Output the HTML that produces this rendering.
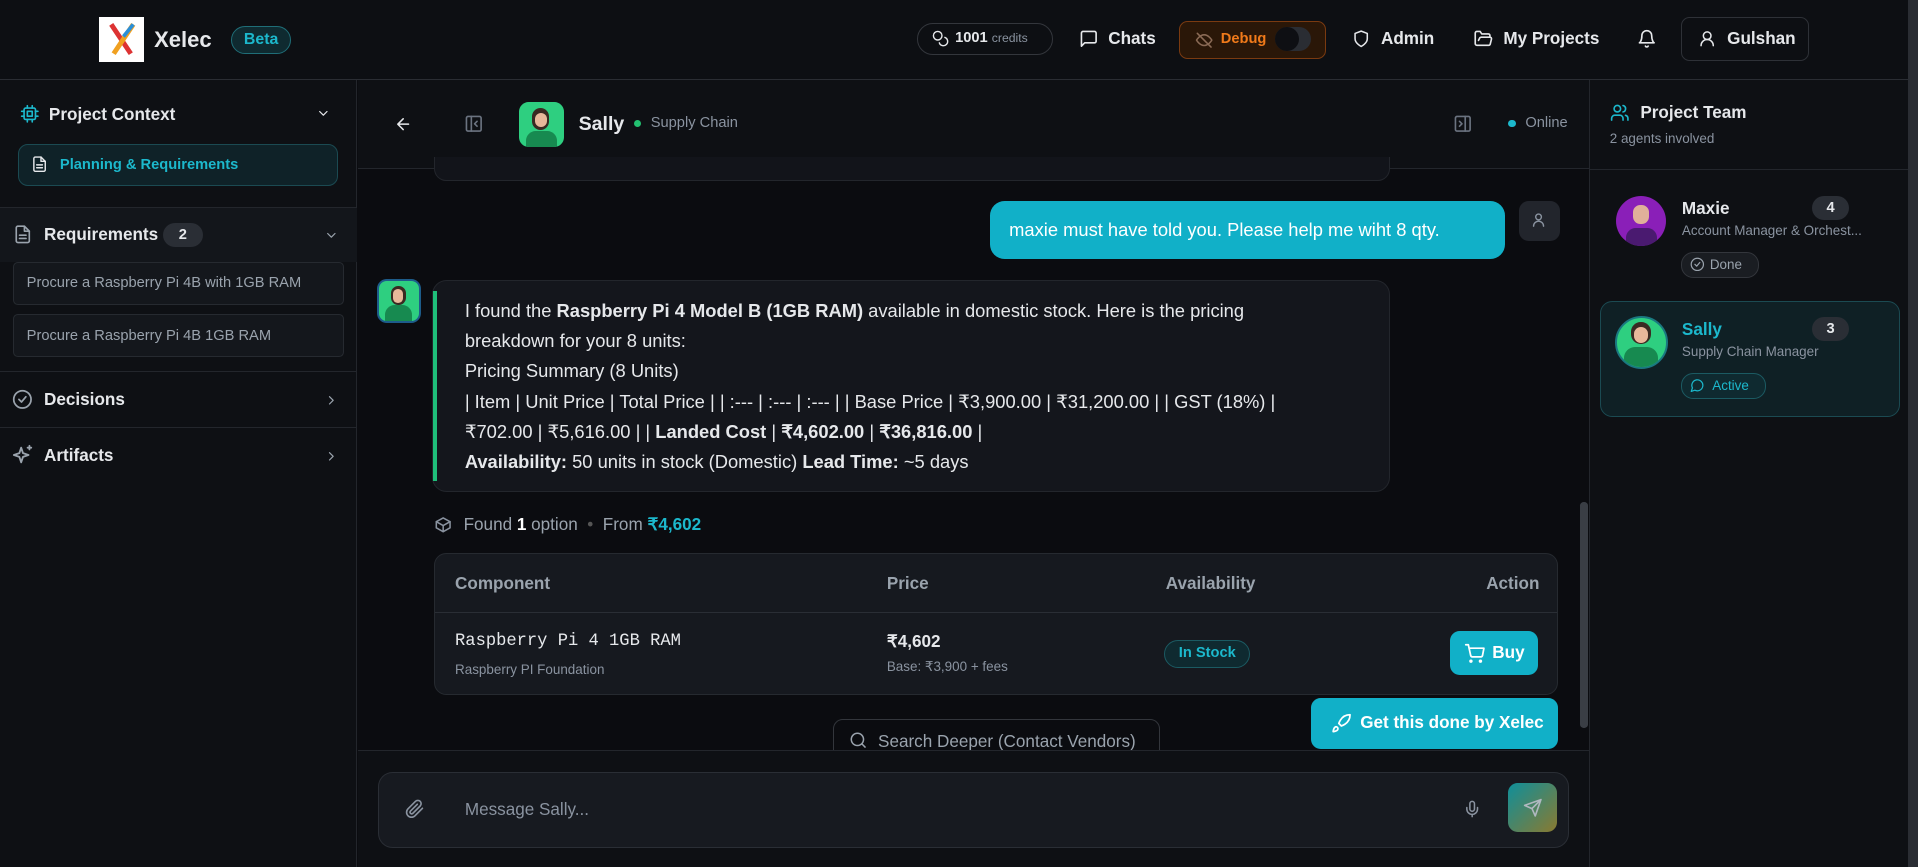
<!DOCTYPE html>
<html><head><meta charset="utf-8"><style>
html{zoom:1.22321}
*{box-sizing:border-box;margin:0;padding:0}
body{width:1568px;height:709px;overflow:hidden;background:#0b0c10;font-family:"Liberation Sans",sans-serif;color:#e6e8eb;position:relative}
.a{position:absolute}
svg{display:block}
.ic{fill:none;stroke:currentColor;stroke-width:2;stroke-linecap:round;stroke-linejoin:round}
.b{font-weight:bold}
</style></head><body>
<!-- header -->
<div class="a" style="left:0;top:0;width:1568px;height:65px;background:#0d0f13;border-bottom:1px solid #2a2d33"></div>
<div class="a" style="left:81px;top:14px;width:37px;height:37px;background:#fff">
<svg width="37" height="37" viewBox="0 0 37 37"><path d="M10 6 L26 30" stroke="#d33" stroke-width="4"/><path d="M28 6 L12 30" stroke="#f0a020" stroke-width="4"/><path d="M28 6 L20 16" stroke="#2a8fd8" stroke-width="3"/></svg></div>
<div class="a b" style="left:126px;top:22px;font-size:18px">Xelec</div>
<div class="a b" style="left:189px;top:21px;width:49px;height:23px;border:1px solid #1f6e78;background:#0f2a30;border-radius:12px;color:#1cb8cc;font-size:13px;text-align:center;line-height:21px">Beta</div>

<div class="a" style="left:750px;top:19px;width:111px;height:26px;border:1px solid #33363c;border-radius:13px;font-size:12px;line-height:24px;padding-left:30px"><span class="b">1001</span> <span style="color:#8a93a0;font-size:10px">credits</span>
<svg class="a ic" style="left:11px;top:5px" width="14" height="14" viewBox="0 0 24 24"><circle cx="8" cy="8" r="6"/><path d="M18.1 10.4A6 6 0 1 1 10.3 18"/></svg></div>
<svg class="a ic" style="left:882px;top:24px" width="16" height="16" viewBox="0 0 24 24"><path d="M21 15a2 2 0 0 1-2 2H7l-4 4V5a2 2 0 0 1 2-2h14a2 2 0 0 1 2 2z"/></svg>
<div class="a b" style="left:906px;top:24px;font-size:14px">Chats</div>
<div class="a" style="left:964px;top:17px;width:120px;height:31px;border:1px solid #7a3a10;background:#2a1708;border-radius:7px"></div>
<svg class="a ic" style="left:977px;top:25px;color:#8a6a55" width="15" height="15" viewBox="0 0 24 24"><path d="M2 12s4-7 10-7 10 7 10 7-4 7-10 7S2 12 2 12z"/><path d="M3 3l18 18"/></svg>
<div class="a b" style="left:998px;top:25px;font-size:12px;color:#f07a1a">Debug</div>
<div class="a" style="left:1042px;top:22px;width:30px;height:20px;border-radius:10px;background:#2a2d33"><div style="width:20px;height:20px;border-radius:10px;background:#0e0f13"></div></div>
<svg class="a ic" style="left:1105px;top:24px" width="15" height="16" viewBox="0 0 24 24"><path d="M12 22s8-4 8-10V5l-8-3-8 3v7c0 6 8 10 8 10z"/></svg>
<div class="a b" style="left:1129px;top:24px;font-size:14px">Admin</div>
<svg class="a ic" style="left:1204px;top:24px" width="17" height="16" viewBox="0 0 24 24"><path d="M6 14l1.5-3A2 2 0 0 1 9.2 10H20a2 2 0 0 1 1.9 2.5l-1.5 6A2 2 0 0 1 18.4 20H4a2 2 0 0 1-2-2V5a2 2 0 0 1 2-2h4l2 3h8a2 2 0 0 1 2 2v2"/></svg>
<div class="a b" style="left:1229px;top:24px;font-size:14px">My Projects</div>
<svg class="a ic" style="left:1338px;top:24px" width="16" height="16" viewBox="0 0 24 24"><path d="M6 8a6 6 0 0 1 12 0c0 7 3 9 3 9H3s3-2 3-9"/><path d="M10.3 21a1.9 1.9 0 0 0 3.4 0"/></svg>
<div class="a" style="left:1374px;top:14px;width:105px;height:36px;border:1px solid #2e3137;border-radius:7px"></div>
<svg class="a ic" style="left:1388px;top:24px" width="15" height="16" viewBox="0 0 24 24"><circle cx="12" cy="8" r="5"/><path d="M20 21a8 8 0 0 0-16 0"/></svg>
<div class="a b" style="left:1412px;top:24px;font-size:14px">Gulshan</div>

<!-- left sidebar -->
<div class="a" style="left:0;top:65px;width:292px;height:644px;background:#0e1014;border-right:1px solid #23262c"></div>
<svg class="a ic" style="left:16px;top:85px;color:#1cb8cc" width="16" height="16" viewBox="0 0 24 24"><rect x="5" y="5" width="14" height="14" rx="2"/><rect x="9" y="9" width="6" height="6"/><path d="M9 2v3M15 2v3M9 19v3M15 19v3M2 9h3M2 15h3M19 9h3M19 15h3"/></svg>
<div class="a b" style="left:40px;top:86px;font-size:14px">Project Context</div>
<svg class="a ic" style="left:258px;top:87px" width="12" height="12" viewBox="0 0 24 24"><path d="M6 9l6 6 6-6"/></svg>
<div class="a" style="left:15px;top:118px;width:261px;height:34px;border:1px solid #1b4a52;background:#0f2228;border-radius:8px"></div>
<svg class="a ic" style="left:25px;top:127px" width="14" height="15" viewBox="0 0 24 24"><path d="M14 2H6a2 2 0 0 0-2 2v16a2 2 0 0 0 2 2h12a2 2 0 0 0 2-2V8z"/><path d="M14 2v6h6M8 13h8M8 17h8"/></svg>
<div class="a b" style="left:49px;top:128px;font-size:12px;color:#1cb8cc">Planning &amp; Requirements</div>
<div class="a" style="left:0;top:169px;width:292px;height:45px;background:#13161b;border-top:1px solid #23262c"></div>
<svg class="a ic" style="left:11px;top:183px;color:#9aa3ad" width="16" height="17" viewBox="0 0 24 24"><path d="M14 2H6a2 2 0 0 0-2 2v16a2 2 0 0 0 2 2h12a2 2 0 0 0 2-2V8z"/><path d="M14 2v6h6M8 13h8M8 17h8"/></svg>
<div class="a b" style="left:36px;top:184px;font-size:14px">Requirements</div>
<div class="a b" style="left:133px;top:182px;width:33px;height:20px;border-radius:10px;background:#2a2e35;font-size:12px;text-align:center;line-height:20px">2</div>
<svg class="a ic" style="left:265px;top:186px;color:#9aa3ad" width="12" height="12" viewBox="0 0 24 24"><path d="M6 9l6 6 6-6"/></svg>
<div class="a" style="left:11px;top:214px;width:270px;height:35px;border:1px solid #262a30;background:#14171c;border-radius:4px;font-size:12px;color:#9aa3ad;padding:10px 0 0 10px">Procure a Raspberry Pi 4B with 1GB RAM</div>
<div class="a" style="left:11px;top:257px;width:270px;height:35px;border:1px solid #262a30;background:#14171c;border-radius:4px;font-size:12px;color:#9aa3ad;padding:10px 0 0 10px">Procure a Raspberry Pi 4B 1GB RAM</div>
<div class="a" style="left:0;top:303px;width:292px;height:1px;background:#23262c"></div>
<svg class="a ic" style="left:10px;top:318px;color:#9aa3ad" width="17" height="17" viewBox="0 0 24 24"><circle cx="12" cy="12" r="10"/><path d="M8 12l3 3 5-6"/></svg>
<div class="a b" style="left:36px;top:319px;font-size:14px">Decisions</div>
<svg class="a ic" style="left:265px;top:321px;color:#9aa3ad" width="12" height="12" viewBox="0 0 24 24"><path d="M9 6l6 6-6 6"/></svg>
<div class="a" style="left:0;top:349px;width:292px;height:1px;background:#23262c"></div>
<svg class="a ic" style="left:10px;top:363px;color:#9aa3ad" width="18" height="18" viewBox="0 0 24 24"><path d="M10 4l2 6 6 2-6 2-2 6-2-6-6-2 6-2z"/><path d="M19 2v4M17 4h4"/></svg>
<div class="a b" style="left:36px;top:365px;font-size:14px">Artifacts</div>
<svg class="a ic" style="left:265px;top:367px;color:#9aa3ad" width="12" height="12" viewBox="0 0 24 24"><path d="M9 6l6 6-6 6"/></svg>

<!-- chat header -->
<div class="a" style="left:293px;top:65px;width:1006px;height:73px;background:#0e1014;border-bottom:1px solid #23262c"></div>
<svg class="a ic" style="left:322px;top:94px" width="15" height="15" viewBox="0 0 24 24"><path d="M19 12H5M12 19l-7-7 7-7"/></svg>
<svg class="a ic" style="left:379px;top:93px;color:#6b7380" width="16" height="16" viewBox="0 0 24 24"><rect x="3" y="3" width="18" height="18" rx="2"/><path d="M9 3v18M16 15l-3-3 3-3"/></svg>
<div class="a" style="left:424px;top:83px;width:37px;height:37px;border-radius:8px;background:#2ecf80;overflow:hidden"><div class="a" style="left:11px;top:5px;width:14px;height:18px;border-radius:7px;background:#3a2a22"></div><div class="a" style="left:13px;top:9px;width:10px;height:12px;border-radius:5px;background:#e8b89a"></div><div class="a" style="left:6px;top:24px;width:25px;height:16px;border-radius:8px 8px 0 0;background:#178a50"></div></div>
<div class="a b" style="left:473px;top:92px;font-size:16px">Sally</div>
<div class="a" style="left:518px;top:98px;width:6px;height:6px;border-radius:3px;background:#22c070"></div>
<div class="a" style="left:532px;top:94px;font-size:12px;color:#8a93a0">Supply Chain</div>
<svg class="a ic" style="left:1188px;top:93px;color:#6b7380" width="16" height="16" viewBox="0 0 24 24"><rect x="3" y="3" width="18" height="18" rx="2"/><path d="M15 3v18M8 9l3 3-3 3"/></svg>
<div class="a" style="left:1233px;top:98px;width:6px;height:6px;border-radius:3px;background:#1cb8cc"></div>
<div class="a" style="left:1247px;top:94px;font-size:12px;color:#8a93a0">Online</div>

<!-- messages -->
<div class="a" style="left:355px;top:128px;width:781px;height:20px;border:1px solid #23262c;border-top:none;border-radius:0 0 10px 10px;background:#12141a"></div>
<div class="a" style="left:809px;top:164px;width:421px;height:48px;background:#11b0c8;border-radius:12px;color:#fff;font-size:15px;padding:15px 0 0 16px">maxie must have told you. Please help me wiht 8 qty.</div>
<div class="a" style="left:1242px;top:164px;width:33px;height:33px;border-radius:8px;background:#22252c"></div>
<svg class="a ic" style="left:1251px;top:172px;color:#8a93a0" width="14" height="16" viewBox="0 0 24 24"><circle cx="12" cy="8" r="4"/><path d="M19 21a7 7 0 0 0-14 0"/></svg>

<div class="a" style="left:308px;top:228px;width:36px;height:36px;border-radius:8px;border:2px solid #1d5c8a;background:#2ecf80;overflow:hidden"><div class="a" style="left:10px;top:4px;width:12px;height:16px;border-radius:6px;background:#3a2a22"></div><div class="a" style="left:12px;top:7px;width:8px;height:11px;border-radius:4px;background:#e8b89a"></div><div class="a" style="left:5px;top:20px;width:22px;height:16px;border-radius:8px 8px 0 0;background:#178a50"></div></div>
<div class="a" style="left:353px;top:229px;width:783px;height:173px;background:#14161c;border:1px solid #23262c;border-radius:12px"></div>
<div class="a" style="left:354px;top:238px;width:3px;height:155px;background:#1fbf7a"></div>
<div class="a" style="left:380px;top:242px;width:700px;font-size:15px;line-height:24.7px;color:#e6e8eb">I found the <b>Raspberry Pi 4 Model B (1GB RAM)</b> available in domestic stock. Here is the pricing breakdown for your 8 units:<br>Pricing Summary (8 Units)<br>| Item | Unit Price | Total Price | | :--- | :--- | :--- | | Base Price | ₹3,900.00 | ₹31,200.00 | | GST (18%) | ₹702.00 | ₹5,616.00 | | <b>Landed Cost</b> | <b>₹4,602.00</b> | <b>₹36,816.00</b> |<br><b>Availability:</b> 50 units in stock (Domestic) <b>Lead Time:</b> ~5 days</div>

<svg class="a ic" style="left:355px;top:421px;color:#8a93a0" width="15" height="16" viewBox="0 0 24 24"><path d="M21 8l-9-5-9 5v8l9 5 9-5z"/><path d="M3 8l9 5 9-5M12 13v8"/></svg>
<div class="a" style="left:379px;top:421px;font-size:14px;color:#9aa3ad">Found <b style="color:#fff">1</b> option &nbsp;<span style="color:#555">•</span>&nbsp; From <b style="color:#1cb8cc">₹4,602</b></div>

<div class="a" style="left:355px;top:452px;width:919px;height:116px;background:#16191f;border:1px solid #262a30;border-radius:10px"></div>
<div class="a" style="left:356px;top:500px;width:917px;height:1px;background:#2a2e35"></div>
<div class="a b" style="left:372px;top:469px;font-size:14px;color:#9aa3ad">Component</div>
<div class="a b" style="left:725px;top:469px;font-size:14px;color:#9aa3ad">Price</div>
<div class="a b" style="left:953px;top:469px;font-size:14px;color:#9aa3ad">Availability</div>
<div class="a b" style="left:1215px;top:469px;font-size:14px;color:#9aa3ad">Action</div>
<div class="a" style="left:372px;top:517px;font-size:14px;font-family:'Liberation Mono',monospace">Raspberry Pi 4 1GB RAM</div>
<div class="a" style="left:372px;top:541px;font-size:11px;color:#8a93a0">Raspberry PI Foundation</div>
<div class="a b" style="left:725px;top:517px;font-size:14px">₹4,602</div>
<div class="a" style="left:725px;top:539px;font-size:11px;color:#8a93a0">Base: ₹3,900 + fees</div>
<div class="a b" style="left:952px;top:523px;width:70px;height:23px;border:1px solid #1b5a62;background:#0f2a30;border-radius:12px;font-size:12px;color:#1cb8cc;text-align:center;line-height:21px">In Stock</div>
<div class="a b" style="left:1185px;top:516px;width:72px;height:36px;background:#11b0c8;border-radius:8px;color:#fff;font-size:14px;line-height:36px;padding-left:35px">Buy</div>
<svg class="a ic" style="left:1197px;top:526px;color:#fff" width="17" height="17" viewBox="0 0 24 24"><circle cx="8" cy="21" r="1"/><circle cx="19" cy="21" r="1"/><path d="M2 2h3l2.7 12.4a2 2 0 0 0 2 1.6h9.7a2 2 0 0 0 2-1.6L23 6H6"/></svg>
<div class="a b" style="left:1072px;top:571px;width:202px;height:41px;background:#11b0c8;border-radius:8px;color:#fff;font-size:14px;line-height:41px;padding-left:40px">Get this done by Xelec</div>
<svg class="a ic" style="left:1088px;top:583px;color:#fff" width="17" height="17" viewBox="0 0 24 24"><path d="M4.5 16.5c-1.5 1.3-2 5-2 5s3.7-.5 5-2c.7-.8.7-2.1-.1-2.9a2.2 2.2 0 0 0-2.9-.1z"/><path d="M12 15l-3-3a22 22 0 0 1 2-4A12.9 12.9 0 0 1 22 2c0 2.7-.8 7.5-6 11a22.4 22.4 0 0 1-4 2z"/></svg>
<div class="a" style="left:681px;top:588px;width:267px;height:30px;border:1px solid #33363c;border-bottom:none;border-radius:8px 8px 0 0;font-size:14px;color:#9aa3ad;padding:10px 0 0 36px">Search Deeper (Contact Vendors)</div>
<svg class="a ic" style="left:694px;top:598px;color:#9aa3ad" width="15" height="15" viewBox="0 0 24 24"><circle cx="11" cy="11" r="8"/><path d="M21 21l-4.3-4.3"/></svg>
<div class="a" style="left:1292px;top:410px;width:6px;height:185px;background:#3a3e45;border-radius:3px"></div>

<!-- composer -->
<div class="a" style="left:293px;top:613px;width:1006px;height:96px;background:#0e1014;border-top:1px solid #23262c"></div>
<div class="a" style="left:309px;top:631px;width:974px;height:62px;background:#171a20;border:1px solid #2a2e35;border-radius:12px"></div>
<svg class="a ic" style="left:331px;top:652px;color:#8a93a0" width="16" height="18" viewBox="0 0 24 24"><path d="M21.4 11.1l-9.2 9.2a6 6 0 0 1-8.5-8.5l9.2-9.2a4 4 0 0 1 5.7 5.7l-9.2 9.2a2 2 0 0 1-2.8-2.8l8.5-8.5"/></svg>
<div class="a" style="left:380px;top:654px;font-size:14px;color:#8a93a0">Message Sally...</div>
<svg class="a ic" style="left:1196px;top:652px;color:#8a93a0" width="15" height="18" viewBox="0 0 24 24"><rect x="9" y="2" width="6" height="13" rx="3"/><path d="M19 10v2a7 7 0 0 1-14 0v-2M12 19v3"/></svg>
<div class="a" style="left:1233px;top:640px;width:40px;height:40px;border-radius:8px;background:linear-gradient(135deg,#0f8f9a,#8a7a30)"></div>
<svg class="a ic" style="left:1245px;top:652px;color:#b0b8c0" width="16" height="16" viewBox="0 0 24 24"><path d="M22 2L11 13M22 2l-7 20-4-9-9-4z"/></svg>

<!-- right panel -->
<div class="a" style="left:1299px;top:65px;width:261px;height:644px;background:#0e1014;border-left:1px solid #23262c"></div>
<div class="a" style="left:1299px;top:138px;width:261px;height:1px;background:#23262c"></div>
<div class="a" style="left:1560px;top:0;width:8px;height:709px;background:#2a2d33"></div>
<svg class="a ic" style="left:1316px;top:84px;color:#1cb8cc" width="16" height="16" viewBox="0 0 24 24"><path d="M16 21v-2a4 4 0 0 0-4-4H6a4 4 0 0 0-4 4v2"/><circle cx="9" cy="7" r="4"/><path d="M22 21v-2a4 4 0 0 0-3-3.9M16 3.1a4 4 0 0 1 0 7.8"/></svg>
<div class="a b" style="left:1341px;top:84px;font-size:14px">Project Team</div>
<div class="a" style="left:1316px;top:107px;font-size:11px;color:#8a93a0">2 agents involved</div>

<div class="a" style="left:1321px;top:160px;width:41px;height:41px;border-radius:50%;background:#8a1fb8;overflow:hidden"><div class="a" style="left:14px;top:8px;width:13px;height:15px;border-radius:6px;background:#e0b09a"></div><div class="a" style="left:8px;top:26px;width:26px;height:16px;border-radius:8px 8px 0 0;background:#4a1a70"></div></div>
<div class="a b" style="left:1375px;top:163px;font-size:14px">Maxie</div>
<div class="a" style="left:1375px;top:182px;font-size:11px;color:#8a93a0">Account Manager &amp; Orchest...</div>
<div class="a b" style="left:1481px;top:160px;width:31px;height:20px;border-radius:10px;background:#2a2e35;font-size:12px;text-align:center;line-height:20px">4</div>
<div class="a" style="left:1374px;top:206px;width:64px;height:21px;border:1px solid #33363c;background:#1a1d22;border-radius:10px;font-size:11px;color:#9aa3ad;line-height:19px;padding-left:23px">Done</div>
<svg class="a ic" style="left:1382px;top:210px;color:#9aa3ad" width="12" height="12" viewBox="0 0 24 24"><circle cx="12" cy="12" r="10"/><path d="M8 12l3 3 5-6"/></svg>

<div class="a" style="left:1308px;top:246px;width:245px;height:95px;border:1px solid #1b4a52;background:#0f2025;border-radius:10px"></div>
<div class="a" style="left:1320px;top:258px;width:44px;height:44px;border-radius:50%;border:2px solid #1a7880;background:#2ecf80;overflow:hidden"><div class="a" style="left:12px;top:4px;width:16px;height:18px;border-radius:8px;background:#3a2a22"></div><div class="a" style="left:14px;top:8px;width:12px;height:13px;border-radius:6px;background:#e8b89a"></div><div class="a" style="left:6px;top:24px;width:28px;height:18px;border-radius:9px 9px 0 0;background:#178a50"></div></div>
<div class="a b" style="left:1375px;top:262px;font-size:14px;color:#1cb8cc">Sally</div>
<div class="a" style="left:1375px;top:281px;font-size:11px;color:#8a93a0">Supply Chain Manager</div>
<div class="a b" style="left:1481px;top:259px;width:31px;height:20px;border-radius:10px;background:#2a2e35;font-size:12px;text-align:center;line-height:20px">3</div>
<div class="a" style="left:1374px;top:305px;width:70px;height:21px;border:1px solid #1b5a62;background:#0f2a30;border-radius:10px;font-size:11px;color:#1cb8cc;line-height:19px;padding-left:25px">Active</div>
<svg class="a ic" style="left:1382px;top:309px;color:#1cb8cc" width="12" height="12" viewBox="0 0 24 24"><path d="M7.9 20A9 9 0 1 0 4 16.1L2 22z"/></svg>
</body></html>
